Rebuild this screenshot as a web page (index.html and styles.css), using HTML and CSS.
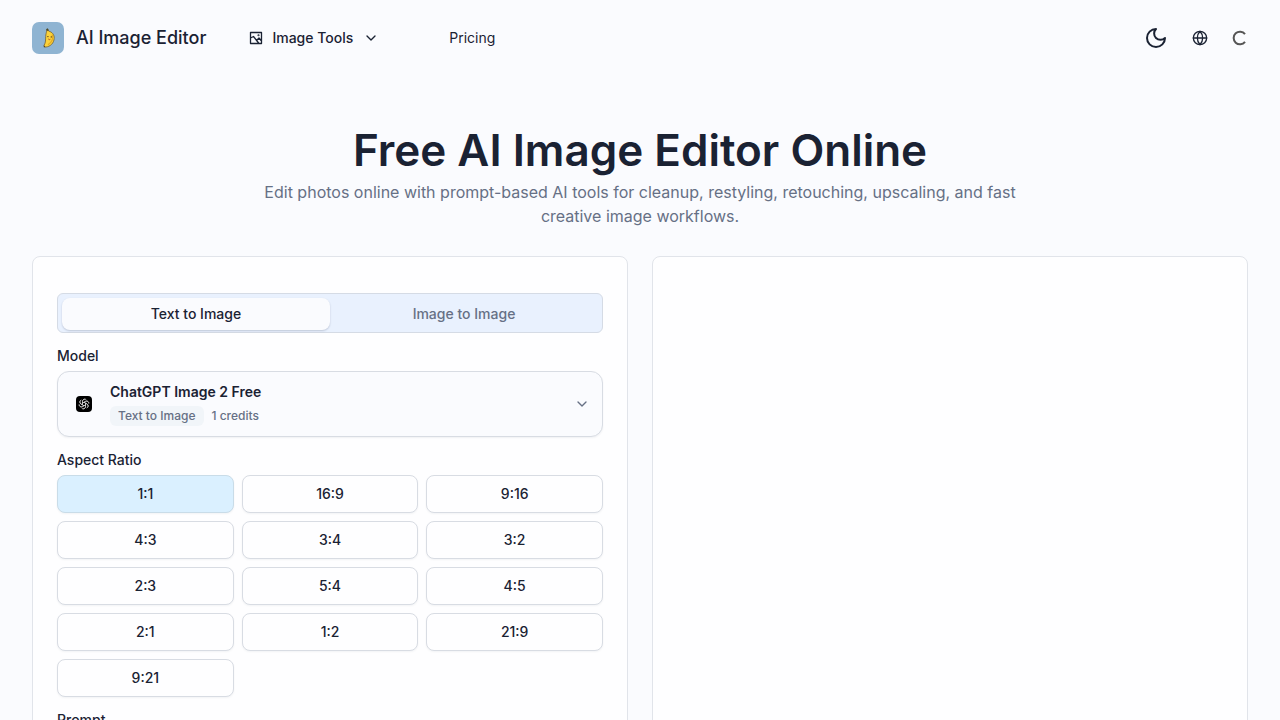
FILE: index.html
```html
<!DOCTYPE html>
<html lang="en">
<head>
  <meta charset="UTF-8" />
  <meta name="viewport" content="width=device-width, initial-scale=1.0"/>
  <title>AI Image Editor</title>
  <link rel="stylesheet" href="styles.css">
</head>
<body>
  <header class="header">
    <a href="#" class="brand">
      <svg class="logo" viewBox="0 0 32 32" aria-hidden="true">
        <rect width="32" height="32" rx="7" fill="#8fb4d2"/>
        <path d="M14.600 7.400l1.300-.5.8 2.200c3.600 1 5.700 3.600 5.500 7.200-.2 4.700-3.700 8.300-8.600 8.800-1.400.2-2.100-1-1.400-2 1.600-2.700 1.300-5.300 1.500-8.500.1-2.400.7-4.200.9-5.300z" fill="#fbd23a" stroke="#6b5426" stroke-width=".7"/>
        <path d="M20.200 12.500c1 3.800-.2 7.800-4.200 10.300" fill="none" stroke="#e3a922" stroke-width="1.200"/>
        <path d="M14.200 6.900l1.600-.5.700 2-1.500.6z" fill="#4c4a2c"/>
        <circle cx="15.900" cy="14.600" r=".7" fill="#4a3820"/>
        <circle cx="19.300" cy="14.900" r=".7" fill="#4a3820"/>
        <path d="M16.300 17q1.100 1.200 2.100.2" fill="none" stroke="#b2502c" stroke-width="1"/>
        <path d="M11.900 23.200l1.600 1.700-1.700.3z" fill="#4c3a22"/>
      </svg>
      <span>AI Image Editor</span>
    </a>
    <nav class="nav">
      <button type="button" class="nav-item">
        <svg class="icon-sm" viewBox="0 0 16 16" aria-hidden="true">
          <path d="M2.500 2.500h11v11h-11zM2.500 8L5.500 6.500l5.500 7M8.500 10.500L11 8l2.500 3"/>
          <circle cx="10.500" cy="5.300" r=".4"/>
        </svg>
        <span>Image Tools</span>
        <svg class="icon-md chevron" viewBox="0 0 24 24" aria-hidden="true"><path d="M6 9l6 6 6-6"/></svg>
      </button>
      <a href="#" class="nav-link">Pricing</a>
    </nav>
    <div class="actions">
      <button type="button" class="icon-btn" aria-label="Toggle theme">
        <svg class="icon-lg" viewBox="0 0 24 24"><path d="M12 3a6 6 0 0 0 9 9 9 9 0 1 1-9-9Z"/></svg>
      </button>
      <button type="button" class="icon-btn" aria-label="Language">
        <svg class="icon-md" viewBox="0 0 24 24"><circle cx="12" cy="12" r="10"/><path d="M12 2a14.500 14.500 0 0 0 0 20 14.500 14.500 0 0 0 0-20M2 12h20"/></svg>
      </button>
      <svg class="icon-md spinner" viewBox="0 0 24 24" aria-hidden="true"><path d="M19.500 17.800a9.500 9.500 0 1 1 0-11.600"/></svg>
    </div>
  </header>

  <main class="main">
    <section class="hero">
      <h1>Free AI Image Editor Online</h1>
      <p>Edit photos online with prompt-based AI tools for cleanup, restyling, retouching, upscaling, and fast creative image workflows.</p>
    </section>

    <div class="workspace">
      <form class="card">
        <div class="tabs" role="tablist">
          <button type="button" class="tab active" role="tab" aria-selected="true">Text to Image</button>
          <button type="button" class="tab" role="tab" aria-selected="false">Image to Image</button>
        </div>

        <div class="field">
          <label for="model">Model</label>
          <button type="button" class="model" id="model">
            <span class="model-icon">
              <svg viewBox="0 0 32 32" aria-hidden="true">
                <rect width="32" height="32" rx="8" fill="#000"/>
                <g fill="none" stroke="#ddd" stroke-width="1.300">
                  <path id="petal" d="M13 17.700V10.500a4.500 4.500 0 0 1 7.500-3.100M13 14.200l6-3.500a4.500 4.500 0 0 1 6.500 3"/>
                  <use href="#petal" transform="rotate(60 16 16)"/>
                  <use href="#petal" transform="rotate(120 16 16)"/>
                  <use href="#petal" transform="rotate(180 16 16)"/>
                  <use href="#petal" transform="rotate(240 16 16)"/>
                  <use href="#petal" transform="rotate(300 16 16)"/>
                </g>
              </svg>
            </span>
            <span class="model-info">
              <span class="model-name">ChatGPT Image 2 Free</span>
              <span class="model-meta"><span class="badge">Text to Image</span><span>1 credits</span></span>
            </span>
            <svg class="icon-md muted" viewBox="0 0 24 24" aria-hidden="true"><path d="M6 9l6 6 6-6"/></svg>
          </button>
        </div>

        <div class="field">
          <span class="label" id="ratio-label">Aspect Ratio</span>
          <div class="ratios" role="group" aria-labelledby="ratio-label">
            <button type="button" class="ratio selected" aria-pressed="true">1:1</button>
            <button type="button" class="ratio">16:9</button>
            <button type="button" class="ratio">9:16</button>
            <button type="button" class="ratio">4:3</button>
            <button type="button" class="ratio">3:4</button>
            <button type="button" class="ratio">3:2</button>
            <button type="button" class="ratio">2:3</button>
            <button type="button" class="ratio">5:4</button>
            <button type="button" class="ratio">4:5</button>
            <button type="button" class="ratio">2:1</button>
            <button type="button" class="ratio">1:2</button>
            <button type="button" class="ratio">21:9</button>
            <button type="button" class="ratio">9:21</button>
          </div>
        </div>

        <div class="field">
          <label for="prompt">Prompt</label>
          <textarea id="prompt" class="prompt" rows="4"></textarea>
        </div>
      </form>
      <section class="card" aria-label="Result"></section>
    </div>
  </main>
</body>
</html>
```
FILE: styles.css
```css
* {
  box-sizing: border-box;
  padding: 0;
  margin: 0;
}
body {
  background: #fafbfe;
  color: #1a2233;
  font-family: Inter, "Liberation Sans", sans-serif;
  font-size: 14px;
  line-height: 20px;
}
button {
  font: inherit;
  color: inherit;
  background: none;
  border: none;
  cursor: pointer;
}
a {
  color: inherit;
  text-decoration: none;
}
svg {
  display: block;
  flex-shrink: 0;
}

.header {
  display: flex;
  align-items: center;
  height: 76px;
  padding: 0 32px;
}
.brand {
  display: flex;
  align-items: center;
  gap: 12px;
  font-size: 18px;
  font-weight: 500;
}
.logo {
  width: 32px;
  height: 32px;
}
.nav {
  display: flex;
  align-items: center;
  gap: 70px;
  margin-left: 42px;
  font-weight: 500;
}
.nav-item {
  display: flex;
  align-items: center;
  gap: 8px;
}
.nav-link {
  font-weight: 400;
}
.icon-sm,
.icon-md,
.icon-lg {
  width: 16px;
  height: 16px;
  fill: none;
  stroke: currentColor;
  stroke-width: 2;
  stroke-linecap: round;
  stroke-linejoin: round;
}
.icon-sm {
  stroke-width: 1.3;
}
.icon-lg {
  width: 24px;
  height: 24px;
}
.chevron {
  margin-left: 2px;
}
.actions {
  display: flex;
  align-items: center;
  gap: 24px;
  margin-left: auto;
}
.spinner {
  color: #555;
  stroke-width: 3;
  stroke-linecap: butt;
}
.muted {
  color: #667085;
}

.main {
  padding: 50px 32px 32px;
}
.hero {
  max-width: 768px;
  margin: 0 auto 28px;
  text-align: center;
}
.hero h1 {
  font-size: 44px;
  font-weight: 600;
  line-height: 48px;
  margin-bottom: 6px;
}
.hero p {
  color: #667085;
  font-size: 16px;
  line-height: 24px;
}

.workspace {
  display: grid;
  grid-template-columns: 1fr 1fr;
  gap: 24px;
}
.card {
  display: flex;
  flex-direction: column;
  gap: 16px;
  padding: 36px 24px 24px;
  background: #fefeff;
  border: 1px solid #e1e4ea;
  border-radius: 8px;
}
.tabs {
  display: grid;
  grid-template-columns: 1fr 1fr;
  height: 40px;
  padding: 4px 4px 2px;
  background: #e9f1fe;
  border: 1px solid #d5dbe5;
  border-radius: 6px;
}
.tab {
  color: #667085;
  font-weight: 500;
  border-radius: 8px;
}
.tab.active {
  color: #1a2233;
  background: #fafbfe;
  box-shadow: 0 1px 2px rgba(20, 30, 60, 0.2);
}
.field {
  display: flex;
  flex-direction: column;
  gap: 8px;
}
.field label,
.label {
  font-weight: 500;
  line-height: 14px;
}
.model {
  display: flex;
  align-items: center;
  gap: 12px;
  padding: 10px 12px;
  text-align: left;
  background: #fafbfe;
  border: 1px solid #d8dce3;
  border-radius: 12px;
  box-shadow: 0 1px 2px rgba(20, 30, 60, 0.06);
}
.model-icon {
  display: flex;
  align-items: center;
  justify-content: center;
  width: 28px;
  height: 28px;
}
.model-icon svg {
  width: 16px;
  height: 16px;
}
.model-info {
  display: flex;
  flex: 1;
  flex-direction: column;
  gap: 4px;
}
.model-name {
  font-weight: 600;
}
.model-meta {
  display: flex;
  align-items: center;
  gap: 8px;
  color: #667085;
  font-size: 12px;
  font-weight: 500;
}
.badge {
  padding: 0 8px;
  background: #f1f5f9;
  border-radius: 6px;
}
.ratios {
  display: grid;
  grid-template-columns: repeat(3, 1fr);
  gap: 8px;
}
.ratio {
  height: 38px;
  font-weight: 500;
  background: #fefeff;
  border: 1px solid #d8dce3;
  border-radius: 8px;
  box-shadow: 0 1px 2px rgba(20, 30, 60, 0.05);
}
.ratio.selected {
  background: #daf0ff;
  border-color: #c9dce8;
}
.prompt {
  padding: 12px;
  font: inherit;
  color: inherit;
  background: #fafbfe;
  border: 1px solid #d8dce3;
  border-radius: 8px;
  resize: vertical;
}
```
